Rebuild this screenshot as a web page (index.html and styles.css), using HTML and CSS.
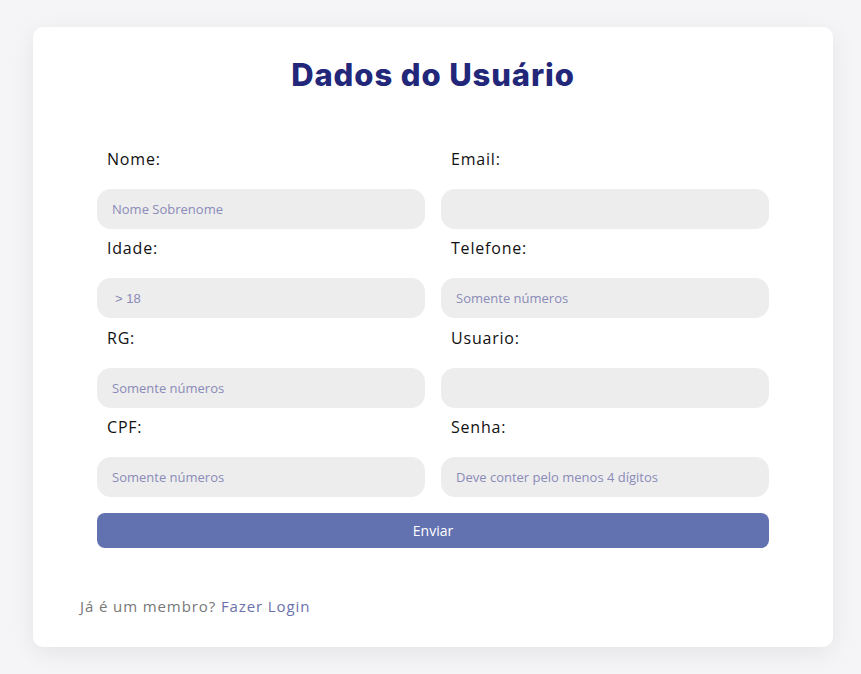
FILE: index.html
```html
<!DOCTYPE html>
<html lang="pt-BR">
<head>
<meta charset="utf-8">
<title>Dados do Usuário</title>
<link rel="stylesheet" href="styles.css">
</head>
<body>
<main class="card">
  <h1 class="title">Dados do Usuário</h1>
  <form class="form">
    <div class="grid">
      <div class="field">
        <label class="label">Nome:</label>
        <input class="input" type="text" placeholder="Nome Sobrenome">
      </div>
      <div class="field">
        <label class="label">Email:</label>
        <input class="input" type="email">
      </div>
      <div class="field">
        <label class="label">Idade:</label>
        <input class="input input-age" type="text" placeholder="> 18">
      </div>
      <div class="field">
        <label class="label">Telefone:</label>
        <input class="input" type="text" placeholder="Somente números">
      </div>
      <div class="field">
        <label class="label">RG:</label>
        <input class="input" type="text" placeholder="Somente números">
      </div>
      <div class="field">
        <label class="label">Usuario:</label>
        <input class="input" type="text">
      </div>
      <div class="field">
        <label class="label">CPF:</label>
        <input class="input" type="text" placeholder="Somente números">
      </div>
      <div class="field">
        <label class="label">Senha:</label>
        <input class="input" type="password" placeholder="Deve conter pelo menos 4 dígitos">
      </div>
    </div>
    <button class="button" type="button">Enviar</button>
  </form>
  <p class="footer">Já é um membro? <a class="link" href="#">Fazer Login</a></p>
</main>
</body>
</html>
```
FILE: styles.css
```css
* { box-sizing: border-box; }
html, body { margin: 0; padding: 0; }
body {
  background: #f5f5f7;
  padding: 27px 0 0 33px;
  min-height: 674px;
}
.card {
  width: 800px;
  height: 620px;
  background: #ffffff;
  border-radius: 10px;
  box-shadow: 0 6px 24px rgba(0, 0, 0, 0.07);
  padding: 28px 64px 0;
  display: flex;
  flex-direction: column;
}
.title {
  margin: 0;
  text-align: center;
  font-family: Inter, "Open Sans", sans-serif;
  font-weight: 800;
  font-size: 31px;
  line-height: 40px;
  color: #22277a;
  letter-spacing: 0.9px;
}
.form {
  margin-top: 54px;
  display: flex;
  flex-direction: column;
  gap: 16px;
}
.grid {
  display: grid;
  grid-template-columns: 1fr 1fr;
  column-gap: 16px;
  row-gap: 9.3px;
}
.field {
  display: flex;
  flex-direction: column;
}
.label {
  padding-left: 10px;
  height: 20px;
  line-height: 20px;
  margin-bottom: 20px;
  font-family: "Open Sans", sans-serif;
  font-size: 16px;
  letter-spacing: 0.8px;
  color: #111111;
}
.input {
  height: 40px;
  border: none;
  outline: none;
  background: #ededed;
  border-radius: 14px;
  padding: 0 15px;
  font-family: "Open Sans", sans-serif;
  font-size: 13px;
  color: #333;
}
.input::placeholder { color: #8a8bb8; }
.input-age::placeholder { font-family: "Liberation Sans", sans-serif; }
.input-age { padding-left: 18px; }
.button {
  height: 35px;
  border: none;
  border-radius: 8px;
  background: #6272b0;
  color: #ffffff;
  font-family: "Open Sans", sans-serif;
  font-size: 14px;
  cursor: pointer;
}
.footer {
  margin: 48px 0 0 -17px;
  font-family: "Open Sans", sans-serif;
  font-size: 15px;
  line-height: 20px;
  letter-spacing: 0.9px;
  color: #777777;
}
.link {
  color: #6b72ab;
  text-decoration: none;
}
```
